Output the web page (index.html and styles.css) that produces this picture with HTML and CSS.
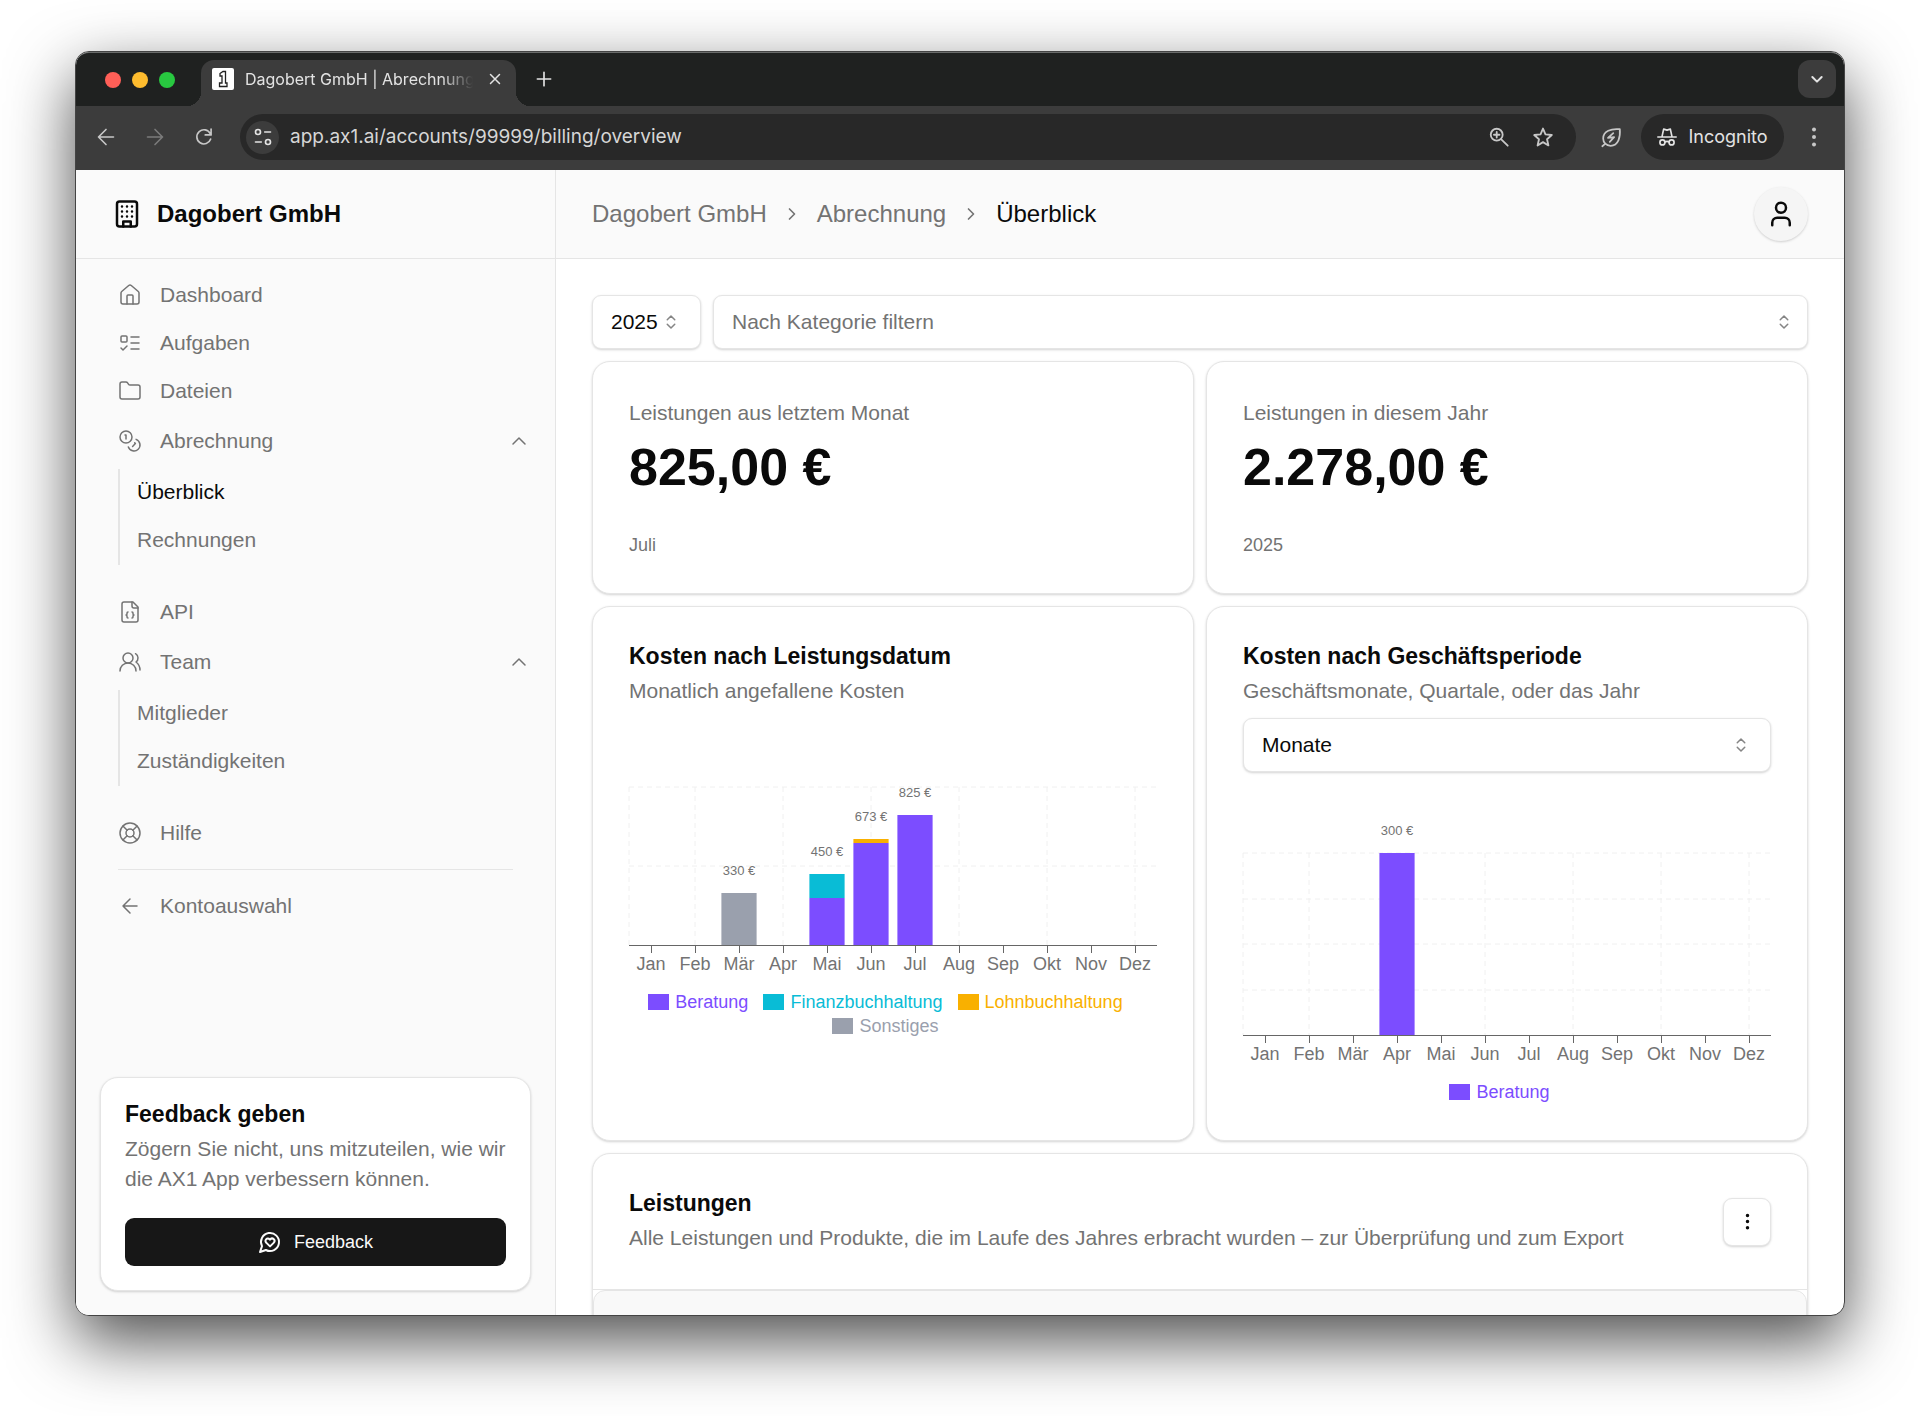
FILE: index.html
```html
<!DOCTYPE html>
<html lang="de">
<head>
  <meta charset="UTF-8" />
  <meta name="viewport" content="width=device-width, initial-scale=1.0" />
  <title>Dagobert GmbH | Abrechnung</title>
  <link rel="stylesheet" href="styles.css">
</head>
<body>
  <div class="window">
    <div class="tab-strip">
      <div class="lights">
        <span class="light red"></span>
        <span class="light yellow"></span>
        <span class="light green"></span>
      </div>
      <div class="tab">
        <svg class="favicon" viewBox="0 0 22 22"><rect width="22" height="22" rx="2" fill="#fff"/><path d="M8 5.500 L11 3.500 H13.500 V15 H15 V18.500 H7.500 V15 H10 V8 H8 Z" fill="#fff" stroke="#222" stroke-width="1.300"/></svg>
        <span class="tab-title">Dagobert GmbH | Abrechnung</span>
        <button class="tab-close" aria-label="Tab schließen"><svg class="icon" viewBox="0 0 24 24"><path d="M6 6l12 12M18 6L6 18"/></svg></button>
      </div>
      <button class="new-tab" aria-label="Neuer Tab"><svg class="icon" viewBox="0 0 24 24"><path d="M12 4v16M4 12h16"/></svg></button>
      <button class="tab-search" aria-label="Tabs durchsuchen"><svg class="icon" viewBox="0 0 24 24"><path d="m5 9 7 7 7-7"/></svg></button>
    </div>

    <div class="toolbar">
      <button class="tool" aria-label="Zurück"><svg class="icon" viewBox="0 0 24 24"><path d="m12 21-9-9 9-9M21 12H3"/></svg></button>
      <button class="tool dim" aria-label="Vorwärts"><svg class="icon" viewBox="0 0 24 24"><path d="m12 21 9-9-9-9M3 12h18"/></svg></button>
      <button class="tool" aria-label="Neu laden"><svg class="icon" viewBox="0 0 24 24"><path d="M20 14.500A8.500 8.500 0 1 1 19.500 8M20.500 2.500v7h-7"/></svg></button>
      <div class="omnibox">
        <button class="site-info" aria-label="Website-Informationen"><svg class="icon" viewBox="0 0 24 24"><circle cx="6" cy="6" r="3"/><path d="M14 6h7M3 18h7"/><circle cx="18" cy="18" r="3"/></svg></button>
        <input type="text" class="url" aria-label="Adresse" value="app.ax1.ai/accounts/99999/billing/overview" />
        <button class="tool" aria-label="Zoom"><svg class="icon" viewBox="0 0 24 24"><circle cx="9.500" cy="9.500" r="6.500"/><path d="m14.500 14.500 7 7M9.500 6.500v6M6.500 9.500h6"/></svg></button>
        <button class="tool" aria-label="Lesezeichen"><svg class="icon" viewBox="0 0 24 24"><path d="m12 2.800 2.700 6.400 6.900.6-5.200 4.600 1.500 6.800-5.900-3.600-5.900 3.600 1.500-6.800L2.400 9.800l6.900-.6z"/></svg></button>
      </div>
      <button class="tool leaf" aria-label="Energiesparmodus"><svg class="icon" viewBox="0 0 24 24"><path d="M21.500 2.500c.8 9-1.500 19-10.500 19-5 0-8.500-3.500-8.500-8.500 0-8.500 9-11.500 19-10.500zM5 19l-3.500 3"/><path d="m14 7-6 5.500 7-1-5 5.500"/></svg></button>
      <button class="incognito"><svg class="icon" viewBox="0 0 24 24"><path d="M1 12h22M6 11.500 8 2.500l4 1.200 4-1.200 2 9"/><circle cx="6.500" cy="18.500" r="3"/><circle cx="17.500" cy="18.500" r="3"/><path d="M9.500 18c1.500-1 3.500-1 5 0"/></svg>Incognito</button>
      <button class="tool menu" aria-label="Menü"><svg viewBox="0 0 24 24" fill="currentColor"><circle cx="12" cy="3" r="2.400"/><circle cx="12" cy="12" r="2.400"/><circle cx="12" cy="21" r="2.400"/></svg></button>
    </div>

    <div class="app">
      <aside class="sidebar">
        <div class="brand">
          <svg class="icon" viewBox="0 0 24 24"><rect width="16" height="20" x="4" y="2" rx="2"/><path d="M9 22v-4h6v4M8 6h.01M16 6h.01M12 6h.01M12 10h.01M12 14h.01M16 10h.01M16 14h.01M8 10h.01M8 14h.01"/></svg>
          Dagobert GmbH
        </div>

        <nav class="nav">
          <a class="nav-item" href="#"><svg class="icon" viewBox="0 0 24 24"><path d="M15 21v-8a1 1 0 0 0-1-1h-4a1 1 0 0 0-1 1v8"/><path d="M3 10a2 2 0 0 1 .709-1.528l7-5.999a2 2 0 0 1 2.582 0l7 5.999A2 2 0 0 1 21 10v9a2 2 0 0 1-2 2H5a2 2 0 0 1-2-2z"/></svg>Dashboard</a>
          <a class="nav-item" href="#"><svg class="icon" viewBox="0 0 24 24"><rect x="3" y="5" width="6" height="6" rx="1"/><path d="m3 17 2 2 4-4M13 6h8M13 12h8M13 18h8"/></svg>Aufgaben</a>
          <a class="nav-item" href="#"><svg class="icon" viewBox="0 0 24 24"><path d="M20 20a2 2 0 0 0 2-2V8a2 2 0 0 0-2-2h-7.900a2 2 0 0 1-1.690-.9L9.600 3.900A2 2 0 0 0 7.930 3H4a2 2 0 0 0-2 2v13a2 2 0 0 0 2 2Z"/></svg>Dateien</a>
          <button class="nav-item nav-group"><svg class="icon" viewBox="0 0 24 24"><circle cx="8" cy="8" r="6"/><path d="M18.090 10.370A6 6 0 1 1 10.340 18M7 6h1v4M16.710 13.880l.7.71-2.820 2.820"/></svg>Abrechnung<svg class="icon caret" viewBox="0 0 24 24"><path d="m18 15-6-6-6 6"/></svg></button>
          <div class="subnav">
            <a class="active" href="#">Überblick</a>
            <a href="#">Rechnungen</a>
          </div>
          <a class="nav-item" href="#"><svg class="icon" viewBox="0 0 24 24"><path d="M15 2H6a2 2 0 0 0-2 2v16a2 2 0 0 0 2 2h12a2 2 0 0 0 2-2V7Z"/><path d="M14 2v4a2 2 0 0 0 2 2h4M10 12a1 1 0 0 0-1 1v1a1 1 0 0 1-1 1 1 1 0 0 1 1 1v1a1 1 0 0 0 1 1M14 18a1 1 0 0 0 1-1v-1a1 1 0 0 1 1-1 1 1 0 0 1-1-1v-1a1 1 0 0 0-1-1"/></svg>API</a>
          <button class="nav-item nav-group"><svg class="icon" viewBox="0 0 24 24"><path d="M18 21a8 8 0 0 0-16 0"/><circle cx="10" cy="8" r="5"/><path d="M22 20c0-3.370-2-6.500-4-8a5 5 0 0 0-.45-8.300"/></svg>Team<svg class="icon caret" viewBox="0 0 24 24"><path d="m18 15-6-6-6 6"/></svg></button>
          <div class="subnav">
            <a href="#">Mitglieder</a>
            <a href="#">Zuständigkeiten</a>
          </div>
          <a class="nav-item" href="#"><svg class="icon" viewBox="0 0 24 24"><circle cx="12" cy="12" r="10"/><path d="m4.930 4.930 4.240 4.240M14.830 9.170l4.240-4.240M14.830 14.830l4.240 4.240M9.170 14.830l-4.240 4.240"/><circle cx="12" cy="12" r="4"/></svg>Hilfe</a>
          <hr>
          <a class="nav-item" href="#"><svg class="icon" viewBox="0 0 24 24"><path d="m12 19-7-7 7-7M19 12H5"/></svg>Kontoauswahl</a>
        </nav>

        <div class="feedback">
          <h2>Feedback geben</h2>
          <p>Zögern Sie nicht, uns mitzuteilen, wie wir die AX1 App verbessern können.</p>
          <button class="feedback-btn"><svg class="icon" viewBox="0 0 24 24"><path d="M7.900 20A9 9 0 1 0 4 16.100L2 22Z"/><path d="M15.800 9.200a2.500 2.500 0 0 0-3.500 0l-.3.4-.35-.3a2.420 2.420 0 1 0-3.200 3.600l3.600 3.500 3.600-3.500c1.200-1.200 1.100-2.700.2-3.700"/></svg>Feedback</button>
        </div>
      </aside>

      <main class="main">
        <header class="topbar">
          <nav class="breadcrumb">
            <a href="#">Dagobert GmbH</a>
            <svg class="icon" viewBox="0 0 24 24"><path d="m9 18 6-6-6-6"/></svg>
            <a href="#">Abrechnung</a>
            <svg class="icon" viewBox="0 0 24 24"><path d="m9 18 6-6-6-6"/></svg>
            <span class="current">Überblick</span>
          </nav>
          <button class="avatar" aria-label="Konto"><svg class="icon" viewBox="0 0 24 24"><path d="M19 21v-2a4 4 0 0 0-4-4H9a4 4 0 0 0-4 4v2"/><circle cx="12" cy="7" r="4"/></svg></button>
        </header>

        <div class="content">
          <div class="filters">
            <div class="select year">
              <select aria-label="Jahr"><option>2025</option><option>2024</option></select>
              <svg class="icon" viewBox="0 0 24 24"><path d="m7 15 5 5 5-5M7 9l5-5 5 5"/></svg>
            </div>
            <div class="select category">
              <select aria-label="Kategorie"><option>Nach Kategorie filtern</option><option>Beratung</option><option>Finanzbuchhaltung</option><option>Lohnbuchhaltung</option><option>Sonstiges</option></select>
              <svg class="icon" viewBox="0 0 24 24"><path d="m7 15 5 5 5-5M7 9l5-5 5 5"/></svg>
            </div>
          </div>

          <div class="cards">
            <section class="card">
              <p class="muted">Leistungen aus letztem Monat</p>
              <div class="amount">825,00 €</div>
              <div class="period">Juli</div>
            </section>
            <section class="card">
              <p class="muted">Leistungen in diesem Jahr</p>
              <div class="amount">2.278,00 €</div>
              <div class="period">2025</div>
            </section>
            <section class="card chart-card">
              <h2>Kosten nach Leistungsdatum</h2>
              <p class="muted">Monatlich angefallene Kosten</p>
              <svg class="chart service-chart" id="serviceChart"></svg>
              <ul class="legend" id="serviceLegend"></ul>
            </section>
            <section class="card chart-card">
              <h2>Kosten nach Geschäftsperiode</h2>
              <p class="muted">Geschäftsmonate, Quartale, oder das Jahr</p>
              <div class="select">
                <select aria-label="Geschäftsperiode"><option>Monate</option><option>Quartale</option><option>Jahr</option></select>
                <svg class="icon" viewBox="0 0 24 24"><path d="m7 15 5 5 5-5M7 9l5-5 5 5"/></svg>
              </div>
              <svg class="chart period-chart" id="periodChart"></svg>
              <ul class="legend" id="periodLegend"></ul>
            </section>
          </div>

          <section class="services">
            <div class="services-head">
              <div>
                <h2>Leistungen</h2>
                <p class="muted">Alle Leistungen und Produkte, die im Laufe des Jahres erbracht wurden – zur Überprüfung und zum Export</p>
              </div>
              <button class="more" aria-label="Weitere Aktionen"><svg class="icon" viewBox="0 0 24 24"><circle cx="12" cy="12" r="1"/><circle cx="12" cy="5" r="1"/><circle cx="12" cy="19" r="1"/></svg></button>
            </div>
            <div class="services-table"></div>
          </section>
        </div>
      </main>
    </div>
  </div>

  <script>
    const months = ["Jan", "Feb", "Mär", "Apr", "Mai", "Jun", "Jul", "Aug", "Sep", "Okt", "Nov", "Dez"];
    const colors = {
      Beratung: "#7c4dff",
      Finanzbuchhaltung: "#09bcd6",
      Lohnbuchhaltung: "#f9b000",
      Sonstiges: "#9aa0ad",
    };

    const serviceData = {
      2: { Sonstiges: 330 },
      4: { Beratung: 300, Finanzbuchhaltung: 150 },
      5: { Beratung: 648, Lohnbuchhaltung: 25 },
      6: { Beratung: 825 },
    };
    const periodData = {
      3: { Beratung: 300 },
    };

    function line(cls, x1, y1, x2, y2) {
      return `<line class="${cls}" x1="${x1}" y1="${y1}" x2="${x2}" y2="${y2}"/>`;
    }

    // top = space above the plot, height = plot height in px
    function drawChart(id, data, options) {
      const { top, height, max, steps } = options;
      const bottom = top + height;
      const step = 100 / months.length;
      let out = "";

      for (let i = 1; i <= steps; i++) {
        const y = Math.round(bottom - (height * i) / steps);
        out += line("grid", 0, y, "100%", y);
      }
      out += line("grid", 0, top, 0, bottom);

      months.forEach((month, i) => {
        const x = step * (i + 0.5) + "%";
        if (i % 2 === 1) out += line("grid", x, top, x, bottom);
        out += line("axis", x, bottom, x, bottom + 8);
        out += `<text class="month" x="${x}" y="${bottom + 25}">${month}</text>`;
      });

      for (const i in data) {
        const left = step * (Number(i) + 0.1) + "%";
        let y = bottom;
        let total = 0;
        for (const name in data[i]) {
          const h = Math.round((data[i][name] / max) * height);
          y -= h;
          total += data[i][name];
          out += `<rect x="${left}" y="${y}" width="${step * 0.8}%" height="${h}" fill="${colors[name]}"/>`;
        }
        out += `<text class="value" x="${step * (Number(i) + 0.5)}%" y="${y - 18}">${total} €</text>`;
      }

      out += line("axis", 0, bottom, "100%", bottom);
      document.getElementById(id).innerHTML = out;
    }

    function drawLegend(id, names) {
      document.getElementById(id).innerHTML = names
        .map((name) => `<li style="color: ${colors[name]}"><span class="swatch"></span>${name}</li>`)
        .join("");
    }

    drawChart("serviceChart", serviceData, { top: 10, height: 158, max: 1000, steps: 2 });
    drawChart("periodChart", periodData, { top: 45, height: 182, max: 300, steps: 4 });
    drawLegend("serviceLegend", Object.keys(colors));
    drawLegend("periodLegend", ["Beratung"]);
  </script>
</body>
</html>
```
FILE: styles.css
```css
:root {
  --text: #0a0a0a;
  --muted: #737373;
  --border: #e5e5e5;
  --panel: #fafafa;
  --chrome: #3c3c3c;
  --chrome-dark: #282828;
  --strip: #1f2120;
  --shadow: 0 1px 3px rgba(0, 0, 0, 0.1), 0 1px 2px rgba(0, 0, 0, 0.08);
}
* {
  box-sizing: border-box;
}
body {
  margin: 0;
  height: 100vh;
  padding: 51px 75px 100px;
  background: #fff;
  color: var(--text);
  font-family: "Liberation Sans", Arial, sans-serif;
  font-size: 21px;
  line-height: 30px;
  overflow: hidden;
}
h2, p, ul {
  margin: 0;
  padding: 0;
}
h2 {
  font-size: 23px;
  line-height: 26px;
}
a {
  color: inherit;
  text-decoration: none;
}
button, select, input {
  font: inherit;
  color: inherit;
}
button {
  display: flex;
  align-items: center;
  justify-content: center;
  padding: 0;
  border: none;
  background: none;
  cursor: pointer;
}
svg {
  flex: none;
}
.icon {
  width: 24px;
  height: 24px;
  fill: none;
  stroke: currentColor;
  stroke-width: 2;
  stroke-linecap: round;
  stroke-linejoin: round;
}
.window {
  display: flex;
  flex-direction: column;
  height: 100%;
  border: 1px solid #444;
  border-radius: 14px;
  background: #fff;
  overflow: hidden;
  box-shadow: 0 25px 66px rgba(0, 0, 0, 0.7);
}

/* browser chrome */
.tab-strip {
  display: flex;
  align-items: flex-end;
  flex: none;
  height: 54px;
  padding-right: 8px;
  background: var(--strip);
  border-top: 1px solid #6a6c6b;
  border-radius: 13px 13px 0 0;
  color: #e3e3e3;
  font-family: Inter, sans-serif;
}
.lights {
  display: flex;
  align-self: center;
  gap: 11px;
  width: 125px;
  padding-left: 29px;
}
.light {
  width: 16px;
  height: 16px;
  border-radius: 50%;
}
.red { background: #ff5f57; }
.yellow { background: #febc2e; }
.green { background: #28c840; }
.tab {
  position: relative;
  display: flex;
  align-items: center;
  width: 315px;
  height: 46px;
  padding: 0 12px 8px 11px;
  background: var(--chrome);
  border-radius: 13px 13px 0 0;
}
.tab::before, .tab::after {
  content: "";
  position: absolute;
  bottom: 0;
  width: 14px;
  height: 14px;
}
.tab::before {
  left: -14px;
  background: radial-gradient(circle at 0 0, transparent 14px, var(--chrome) 14px);
}
.tab::after {
  right: -14px;
  background: radial-gradient(circle at 100% 0, transparent 14px, var(--chrome) 14px);
}
.favicon {
  width: 22px;
  height: 22px;
}
.tab-title {
  flex: 1;
  margin: 0 13px 0 11px;
  font-size: 16px;
  line-height: 22px;
  white-space: nowrap;
  overflow: hidden;
  -webkit-mask-image: linear-gradient(to right, #000 86%, transparent 100%);
  mask-image: linear-gradient(to right, #000 86%, transparent 100%);
}
.tab-close .icon {
  width: 18px;
  height: 18px;
}
.new-tab {
  width: 26px;
  height: 26px;
  margin: 0 0 14px 15px;
}
.new-tab .icon {
  width: 20px;
  height: 20px;
}
.tab-search {
  width: 38px;
  height: 38px;
  margin: 0 0 8px auto;
  border-radius: 12px;
  background: var(--chrome);
}
.tab-search .icon {
  width: 16px;
  height: 16px;
  stroke-width: 3;
}
.toolbar {
  display: flex;
  align-items: center;
  flex: none;
  height: 64px;
  padding: 0 17px 2px;
  background: var(--chrome);
  color: #c7c7c7;
  font-family: Inter, sans-serif;
}
.toolbar .tool {
  width: 26px;
  height: 26px;
  margin-right: 23px;
}
.toolbar .tool .icon {
  width: 20px;
  height: 20px;
}
.toolbar .tool.dim {
  color: #7b7b7b;
}
.omnibox {
  display: flex;
  align-items: center;
  flex: 1;
  height: 46px;
  padding: 0 2px 0 6px;
  border-radius: 23px;
  background: var(--chrome-dark);
}
.omnibox .tool {
  margin-right: 18px;
}
.omnibox .tool .icon {
  width: 22px;
  height: 22px;
}
.site-info {
  width: 33px;
  height: 33px;
  border-radius: 50%;
  background: var(--chrome);
  color: #e3e3e3;
}
.site-info .icon {
  width: 20px;
  height: 20px;
}
.url {
  flex: 1;
  min-width: 0;
  margin-left: 11px;
  padding: 0;
  border: none;
  outline: none;
  background: none;
  color: #d6d6d6;
  font-size: 19px;
}
.toolbar .leaf {
  margin: 0 17px 0 22px;
}
.toolbar .leaf .icon {
  width: 21px;
  height: 21px;
}
.incognito {
  gap: 11px;
  width: 143px;
  height: 46px;
  border-radius: 23px;
  background: var(--chrome-dark);
  color: #e3e3e3;
  font-size: 18px;
}
.incognito .icon {
  width: 20px;
  height: 20px;
}
.toolbar .menu {
  margin: 0 0 0 17px;
}
.toolbar .menu svg {
  width: 20px;
  height: 20px;
}

/* app shell */
.app {
  display: flex;
  flex: 1;
  min-height: 0;
}
.sidebar {
  display: flex;
  flex-direction: column;
  flex: none;
  width: 480px;
  background: var(--panel);
  border-right: 1px solid var(--border);
}
.brand {
  display: flex;
  align-items: center;
  gap: 15px;
  height: 89px;
  padding-left: 36px;
  border-bottom: 1px solid var(--border);
  font-size: 24px;
  font-weight: bold;
}
.brand .icon {
  width: 30px;
  height: 30px;
}
.nav {
  flex: 1;
  padding: 12px 24px 0;
  color: var(--muted);
}
.nav-item {
  display: flex;
  align-items: center;
  justify-content: flex-start;
  gap: 18px;
  width: 100%;
  height: 48px;
  padding-left: 18px;
}
.nav-item .icon {
  stroke-width: 1.5;
}
.nav-group {
  height: 52px;
}
.nav-item .caret {
  margin-left: auto;
}
.subnav {
  margin: 2px 0 23px 18px;
  padding-left: 17px;
  border-left: 2px solid var(--border);
}
.subnav a {
  display: flex;
  align-items: center;
  height: 48px;
  padding-bottom: 2px;
}
.subnav .active {
  color: var(--text);
}
.nav hr {
  height: 1px;
  margin: 12px 18px;
  border: none;
  background: var(--border);
}
.feedback {
  margin: 0 24px 24px;
  padding: 24px;
  background: #fff;
  border: 1px solid var(--border);
  border-radius: 18px;
  box-shadow: var(--shadow);
}
.feedback h2 {
  line-height: 24px;
}
.feedback p {
  margin: 8px 0 24px;
  color: var(--muted);
}
.feedback-btn {
  gap: 12px;
  width: 100%;
  height: 48px;
  border-radius: 9px;
  background: #171717;
  color: #fafafa;
  font-size: 18px;
}
.main {
  flex: 1;
  min-width: 0;
  overflow: hidden;
}
.topbar {
  display: flex;
  align-items: center;
  justify-content: space-between;
  height: 89px;
  padding: 0 36px;
  background: var(--panel);
  border-bottom: 1px solid var(--border);
}
.breadcrumb {
  display: flex;
  align-items: center;
  gap: 15px;
  color: var(--muted);
  font-size: 24px;
}
.breadcrumb .icon {
  width: 20px;
  height: 20px;
}
.breadcrumb .current {
  color: var(--text);
}
.avatar {
  width: 54px;
  height: 54px;
  border-radius: 50%;
  background: #f5f5f5;
  box-shadow: var(--shadow);
}
.avatar .icon {
  width: 30px;
  height: 30px;
}

/* content */
.content {
  display: flex;
  flex-direction: column;
  gap: 12px;
  padding: 36px;
}
.muted {
  color: var(--muted);
}
.filters {
  display: flex;
  gap: 12px;
}
.select {
  position: relative;
}
.select select {
  appearance: none;
  width: 100%;
  height: 54px;
  padding: 0 18px;
  border: 1px solid var(--border);
  border-radius: 9px;
  background: #fff;
  box-shadow: var(--shadow);
}
.select .icon {
  position: absolute;
  top: 18px;
  right: 21px;
  width: 18px;
  height: 18px;
  color: #858585;
  stroke-width: 2;
  pointer-events: none;
}
.select.year {
  width: 109px;
}
.select.category {
  flex: 1;
}
.category select {
  color: var(--muted);
}
.category .icon {
  right: 15px;
}
.cards {
  display: grid;
  grid-template-columns: 1fr 1fr;
  gap: 12px;
}
.card, .services {
  border: 1px solid var(--border);
  border-radius: 18px;
  background: #fff;
  box-shadow: var(--shadow);
}
.card {
  display: flex;
  flex-direction: column;
  padding: 36px;
}
.amount {
  margin: 12px 0 39px;
  font-size: 52px;
  line-height: 54px;
  font-weight: bold;
}
.period {
  color: var(--muted);
  font-size: 18px;
  line-height: 24px;
}
.chart-card .muted, .services .muted {
  margin-top: 7px;
}
.chart-card .select {
  margin-top: 12px;
}
.chart {
  width: 100%;
  overflow: visible;
}
.service-chart {
  height: 199px;
  margin-top: 71px;
}
.period-chart {
  height: 258px;
  margin-top: 36px;
}
.grid {
  stroke: #f0f0f0;
  stroke-width: 1;
  stroke-dasharray: 5 4;
}
.axis {
  stroke: #666;
  stroke-width: 1;
  shape-rendering: crispEdges;
}
.chart text {
  fill: var(--muted);
  text-anchor: middle;
}
.month {
  font-size: 18px;
}
.value {
  font-size: 13px;
}
.legend {
  display: flex;
  flex-wrap: wrap;
  justify-content: center;
  margin-top: 14px;
  list-style: none;
  font-size: 18px;
  line-height: 24px;
}
.legend li {
  display: flex;
  align-items: center;
  gap: 6px;
  margin-right: 15px;
}
.swatch {
  width: 21px;
  height: 16px;
  background: currentColor;
}
.services {
  display: flex;
  flex-direction: column;
}
.services-head {
  display: flex;
  align-items: center;
  justify-content: space-between;
  padding: 36px;
  border-bottom: 1px solid var(--border);
}
.more {
  width: 48px;
  height: 48px;
  border: 1px solid var(--border);
  border-radius: 9px;
  background: #fff;
  box-shadow: var(--shadow);
}
.more .icon {
  width: 21px;
  height: 21px;
}
.services-table {
  height: 300px;
  border: 1px solid var(--border);
  border-radius: 12px;
  background: #f9f9f9;
}
```
